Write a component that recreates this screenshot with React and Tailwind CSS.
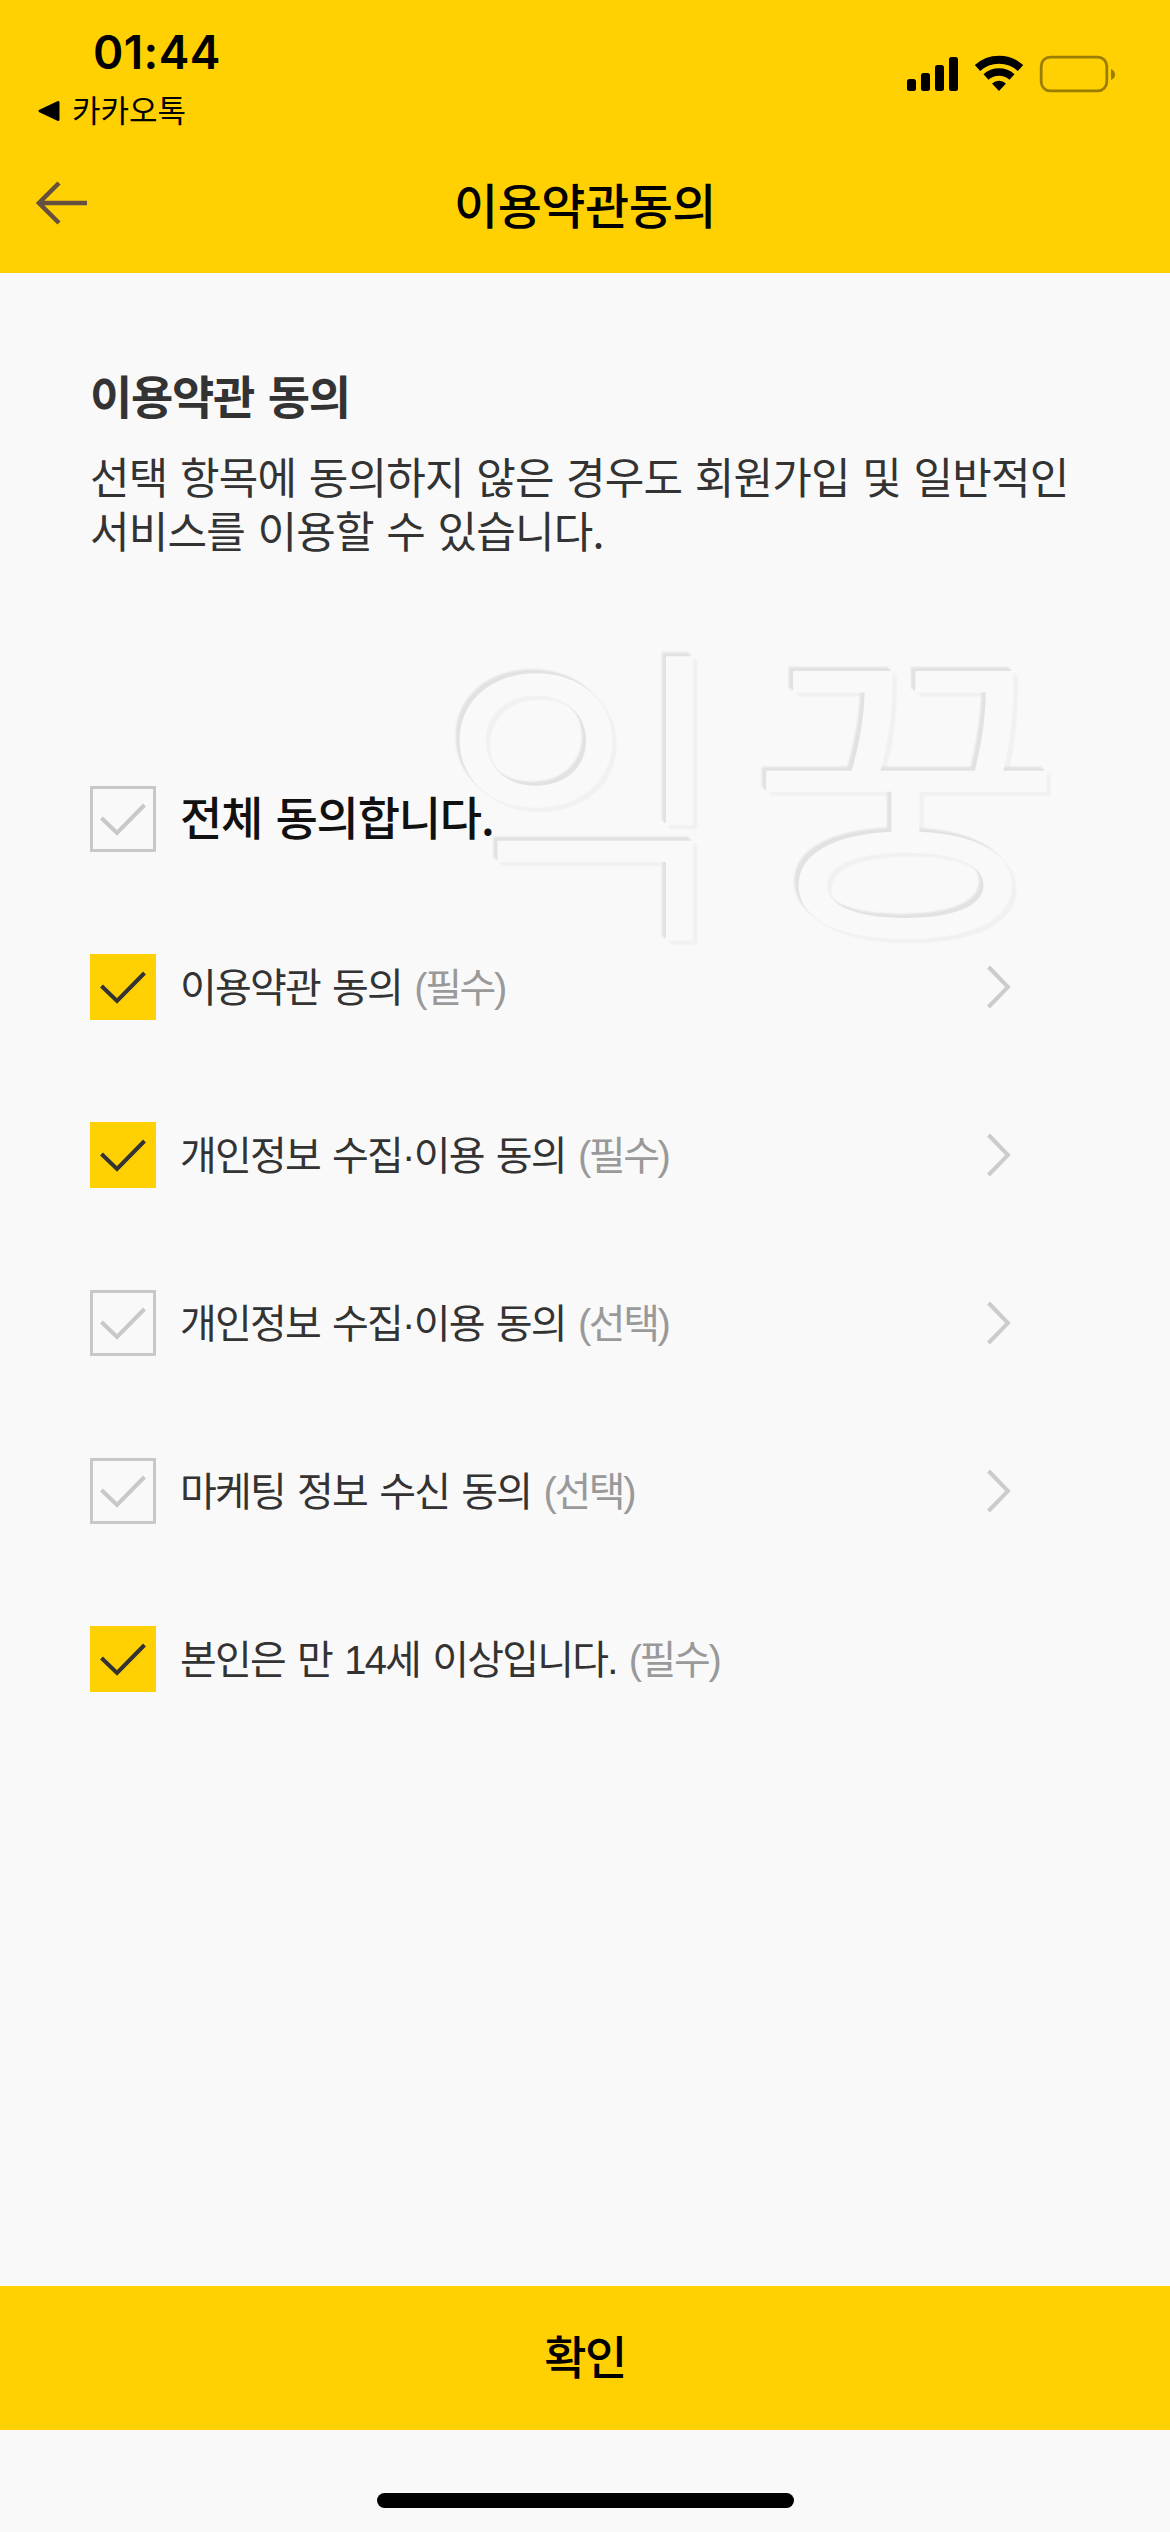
import React, { useState } from 'react'

const TERMS = [
  { id: 'service',   label: '이용약관 동의',           tag: '(필수)', link: true,  checked: true  },
  { id: 'privacy',   label: '개인정보 수집·이용 동의', tag: '(필수)', link: true,  checked: true  },
  { id: 'optional',  label: '개인정보 수집·이용 동의', tag: '(선택)', link: true,  checked: false },
  { id: 'marketing', label: '마케팅 정보 수신 동의',   tag: '(선택)', link: true,  checked: false },
  { id: 'age',       label: '본인은 만 14세 이상입니다.', tag: '(필수)', link: false, checked: true  },
]

function StatusIcons() {
  return (
    <svg width="210" height="40" viewBox="906 54 210 40" className="mt-[54px]">
      <rect x="907" y="79" width="9" height="12" rx="2.5" />
      <rect x="921" y="73" width="9" height="18" rx="2.5" />
      <rect x="935" y="65" width="9" height="26" rx="2.5" />
      <rect x="949" y="57" width="9" height="34" rx="2.5" />
      <path d="M977.5 68 A32 32 0 0 1 1020.5 68" fill="none" stroke="#000" strokeWidth="8" />
      <path d="M986 77 A19.5 19.5 0 0 1 1012 77" fill="none" stroke="#000" strokeWidth="7.5" />
      <path d="M992 83.5 A10.5 10.5 0 0 1 1006 83.5 L999 91 Z" />
      <rect x="1041.2" y="57.2" width="65.6" height="33.6" rx="9" fill="none" stroke="#9b7d02" strokeWidth="2.8" />
      <path d="M1111 69 Q1115 70.5 1115 74.5 Q1115 78.5 1111 80 Z" fill="#9b7d02" />
    </svg>
  )
}

function CheckBox({ checked }) {
  return (
    <span className={`flex w-[66px] h-[66px] shrink-0 ${checked ? 'bg-[#ffd103]' : 'border-[3px] border-[#c8c8c8]'}`}>
      <svg viewBox={checked ? '0 0 66 66' : '3 3 60 60'} className="w-full h-full" fill="none">
        <path d="M11.5 32 L27 47 L54.5 19" stroke={checked ? '#333' : '#c8c8c8'} strokeWidth="4" />
      </svg>
    </span>
  )
}

function TermRow({ term, checked, onToggle }) {
  return (
    <li className="flex items-center h-[66px]">
      <button onClick={onToggle} className="flex items-center">
        <CheckBox checked={checked} />
        <span className="ml-6 mt-[2px] font-['Liberation_Sans','Noto_Sans_CJK_KR',sans-serif] text-[40px] leading-[66px] tracking-[-1.8px] [word-spacing:2.8px] whitespace-pre text-[#333]">
          {term.label} <span className="tracking-[-2.4px] text-[#999]">{term.tag}</span>
        </span>
      </button>
      {term.link && (
        <svg width="24" height="44" viewBox="0 0 24 44" fill="none" className="ml-auto mr-[159px]">
          <path d="M1.5 2 L21 22 L1.5 42" stroke="#ccc" strokeWidth="4" />
        </svg>
      )}
    </li>
  )
}

export default function App() {
  const [agreed, setAgreed] = useState(() => Object.fromEntries(TERMS.map(t => [t.id, t.checked])))
  const all = TERMS.every(t => agreed[t.id])

  const toggle = (id) => setAgreed(a => ({ ...a, [id]: !a[id] }))
  const toggleAll = () => setAgreed(Object.fromEntries(TERMS.map(t => [t.id, !all])))

  return (
    <div className="relative flex flex-col w-[1170px] h-[2532px] overflow-hidden bg-[#f9f9f9] font-['Noto_Sans_CJK_KR',sans-serif]">
      <header className="h-[273px] bg-[#ffd103] text-black">
        <div className="flex justify-between h-[138px] pl-[37px] pr-[54px]">
          <div>
            <div className="mt-[24px] ml-[56px] font-['Inter',sans-serif] font-semibold text-[46px] leading-[56px] tracking-[0.4px]">01:44</div>
            <div className="flex items-center mt-[9px] h-[44px]">
              <svg width="24" height="24" viewBox="0 0 24 24">
                <path d="M3 12 L21 3.5 V20.5 Z" strokeWidth="3" stroke="#000" strokeLinejoin="round" />
              </svg>
              <span className="ml-[11px] -mt-[4px] text-[31px] leading-[44px]">카카오톡</span>
            </div>
          </div>
          <StatusIcons />
        </div>
        <div className="grid grid-cols-[1fr_auto_1fr] items-center h-[135px] px-9">
          <svg width="52" height="44" viewBox="0 0 52 44" fill="none" className="-mt-[5px]">
            <path d="M51 22 H3 M23 2 L3 22 L23 42" stroke="#66503f" strokeWidth="4.5" />
          </svg>
          <h1 className="-mt-[6px] text-[48px] leading-[60px] font-medium tracking-[-0.5px]">이용약관동의</h1>
        </div>
      </header>

      {/* embossed watermark behind the list */}
      <div className="absolute left-[437px] top-[599px] flex text-[314px] text-[#f9f9f9] leading-[360px] select-none [text-shadow:-2px_-2px_1px_#e2e2e2,-4px_-4px_2px_#e2e2e2,2px_2px_1px_#f2f2f2,4px_4px_2px_#f0f0f0]">
        <span className="origin-left scale-x-[1.03]">익</span>
        <span className="ml-[23px] origin-left scale-x-[1.09]">꿍</span>
      </div>

      <main className="relative flex-1 pl-[90px]">
        <h2 className="mt-[88px] text-[46px] leading-[66px] font-bold tracking-[-1.3px] [word-spacing:4.5px] text-[#333]">이용약관 동의</h2>
        <p className="mt-[21px] text-[43px] leading-[54px] tracking-[-0.8px] [word-spacing:3.6px] text-[#333] whitespace-pre-line">
          {'선택 항목에 동의하지 않은 경우도 회원가입 및 일반적인\n서비스를 이용할 수 있습니다.'}
        </p>

        <button onClick={toggleAll} className="flex items-center mt-[230px] h-[66px]">
          <CheckBox checked={all} />
          <span className="ml-6 -mt-[8px] text-[46px] leading-[66px] font-medium tracking-[-1.2px] [word-spacing:4px] text-[#111]">전체 동의합니다.</span>
        </button>
        <ul className="flex flex-col gap-[102px] mt-[102px]">
          {TERMS.map(t => (
            <TermRow key={t.id} term={t} checked={agreed[t.id]} onToggle={() => toggle(t.id)} />
          ))}
        </ul>
      </main>

      <button className="h-[144px] pb-[8px] bg-[#ffd103] text-black text-[46px] leading-[66px] font-medium tracking-[-1.5px]">확인</button>
      <div className="flex justify-center h-[102px] pt-[63px]">
        <div className="w-[417px] h-[15px] rounded-full bg-black" />
      </div>
    </div>
  )
}
